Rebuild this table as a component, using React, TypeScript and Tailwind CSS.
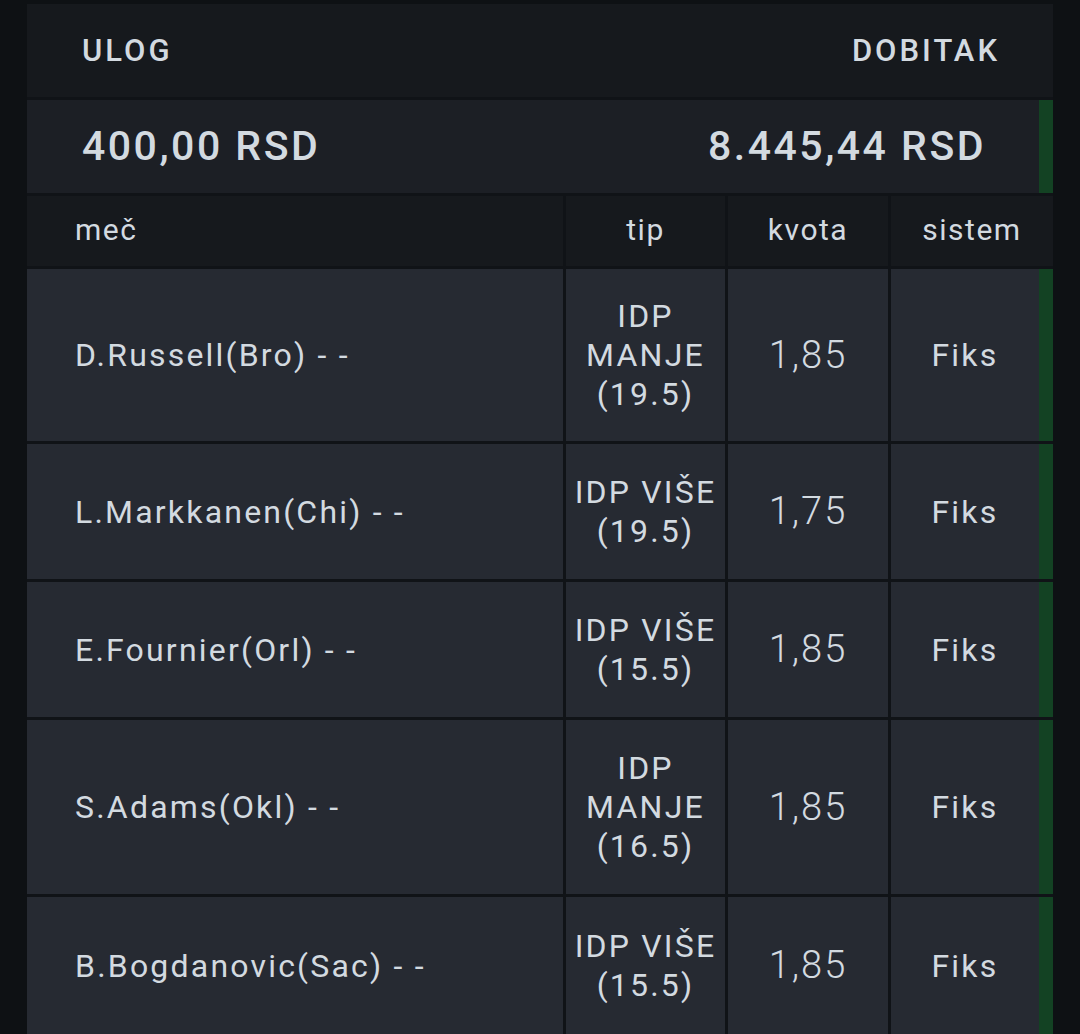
import React from "react";

type Row = { name: string; tip: string[]; kvota: string; sistem: string; h: string };

const rows: Row[] = [
  { name: "D.Russell(Bro) - -", tip: ["IDP", "MANJE", "(19.5)"], kvota: "1,85", sistem: "Fiks", h: "h-[172px]" },
  { name: "L.Markkanen(Chi) - -", tip: ["IDP VIŠE", "(19.5)"], kvota: "1,75", sistem: "Fiks", h: "h-[135px]" },
  { name: "E.Fournier(Orl) - -", tip: ["IDP VIŠE", "(15.5)"], kvota: "1,85", sistem: "Fiks", h: "h-[135px]" },
  { name: "S.Adams(Okl) - -", tip: ["IDP", "MANJE", "(16.5)"], kvota: "1,85", sistem: "Fiks", h: "h-[174px]" },
  { name: "B.Bogdanovic(Sac) - -", tip: ["IDP VIŠE", "(15.5)"], kvota: "1,85", sistem: "Fiks", h: "h-[137px]" },
];

export default function App() {
  return (
    <div
      className="w-[1080px] h-[1034px] overflow-hidden bg-[#0e1114] text-[#d3dae0]"
      style={{ fontFamily: "Roboto, 'Noto Sans', sans-serif" }}
    >
      <div className="ml-[27px] mt-[4px] w-[1026px] flex flex-col gap-[3px] bg-[#101317]">
        {/* header */}
        <div className="h-[93px] bg-[#16191d] flex items-center justify-between pl-[55px] pr-[53px] pt-[2px] text-[31px] font-medium tracking-[3px]">
          <span>ULOG</span>
          <span>DOBITAK</span>
        </div>
        {/* amount */}
        <div className="h-[93px] bg-[#1c1f25] flex items-stretch">
          <div className="flex-1 flex items-center justify-between pl-[55px] pr-[53px] text-[41px] font-medium tracking-[2.5px]">
            <span>400,00 RSD</span>
            <span>8.445,44 RSD</span>
          </div>
          <div className="w-[14px] bg-[#134223]" />
        </div>
        {/* table */}
        <div className="grid grid-cols-[536px_159px_160px_162px] gap-[3px]">
          <div className="h-[70px] bg-[#16191d] flex items-center pl-[48px] pb-[3px] text-[30px] tracking-[1.5px]">meč</div>
          <div className="h-[70px] bg-[#16191d] flex items-center justify-center pb-[3px] text-[30px] tracking-[1.5px]">tip</div>
          <div className="h-[70px] bg-[#16191d] flex items-center justify-center pb-[3px] text-[30px] tracking-[1.5px]">kvota</div>
          <div className="h-[70px] bg-[#16191d] flex items-center justify-center pb-[3px] text-[30px] tracking-[1.5px]">sistem</div>
          {rows.map((r, i) => (
            <React.Fragment key={i}>
              <div className={`${r.h} bg-[#262a32] flex items-center pl-[48px] text-[32px] tracking-[2.2px]`}>
                {r.name}
              </div>
              <div className="bg-[#262a32] flex flex-col items-center justify-center text-[32px] leading-[39px] tracking-[2.2px] text-center">
                {r.tip.map((t, j) => (
                  <span key={j}>{t}</span>
                ))}
              </div>
              <div className="bg-[#262a32] flex items-center justify-center text-[38px] font-light tracking-[2px]">{r.kvota}</div>
              <div className="bg-[#262a32] flex items-stretch">
                <div className="flex-1 flex items-center justify-center text-[32px] tracking-[2.2px]">{r.sistem}</div>
                <div className="w-[14px] bg-[#134223]" />
              </div>
            </React.Fragment>
          ))}
        </div>
      </div>
    </div>
  );
}
